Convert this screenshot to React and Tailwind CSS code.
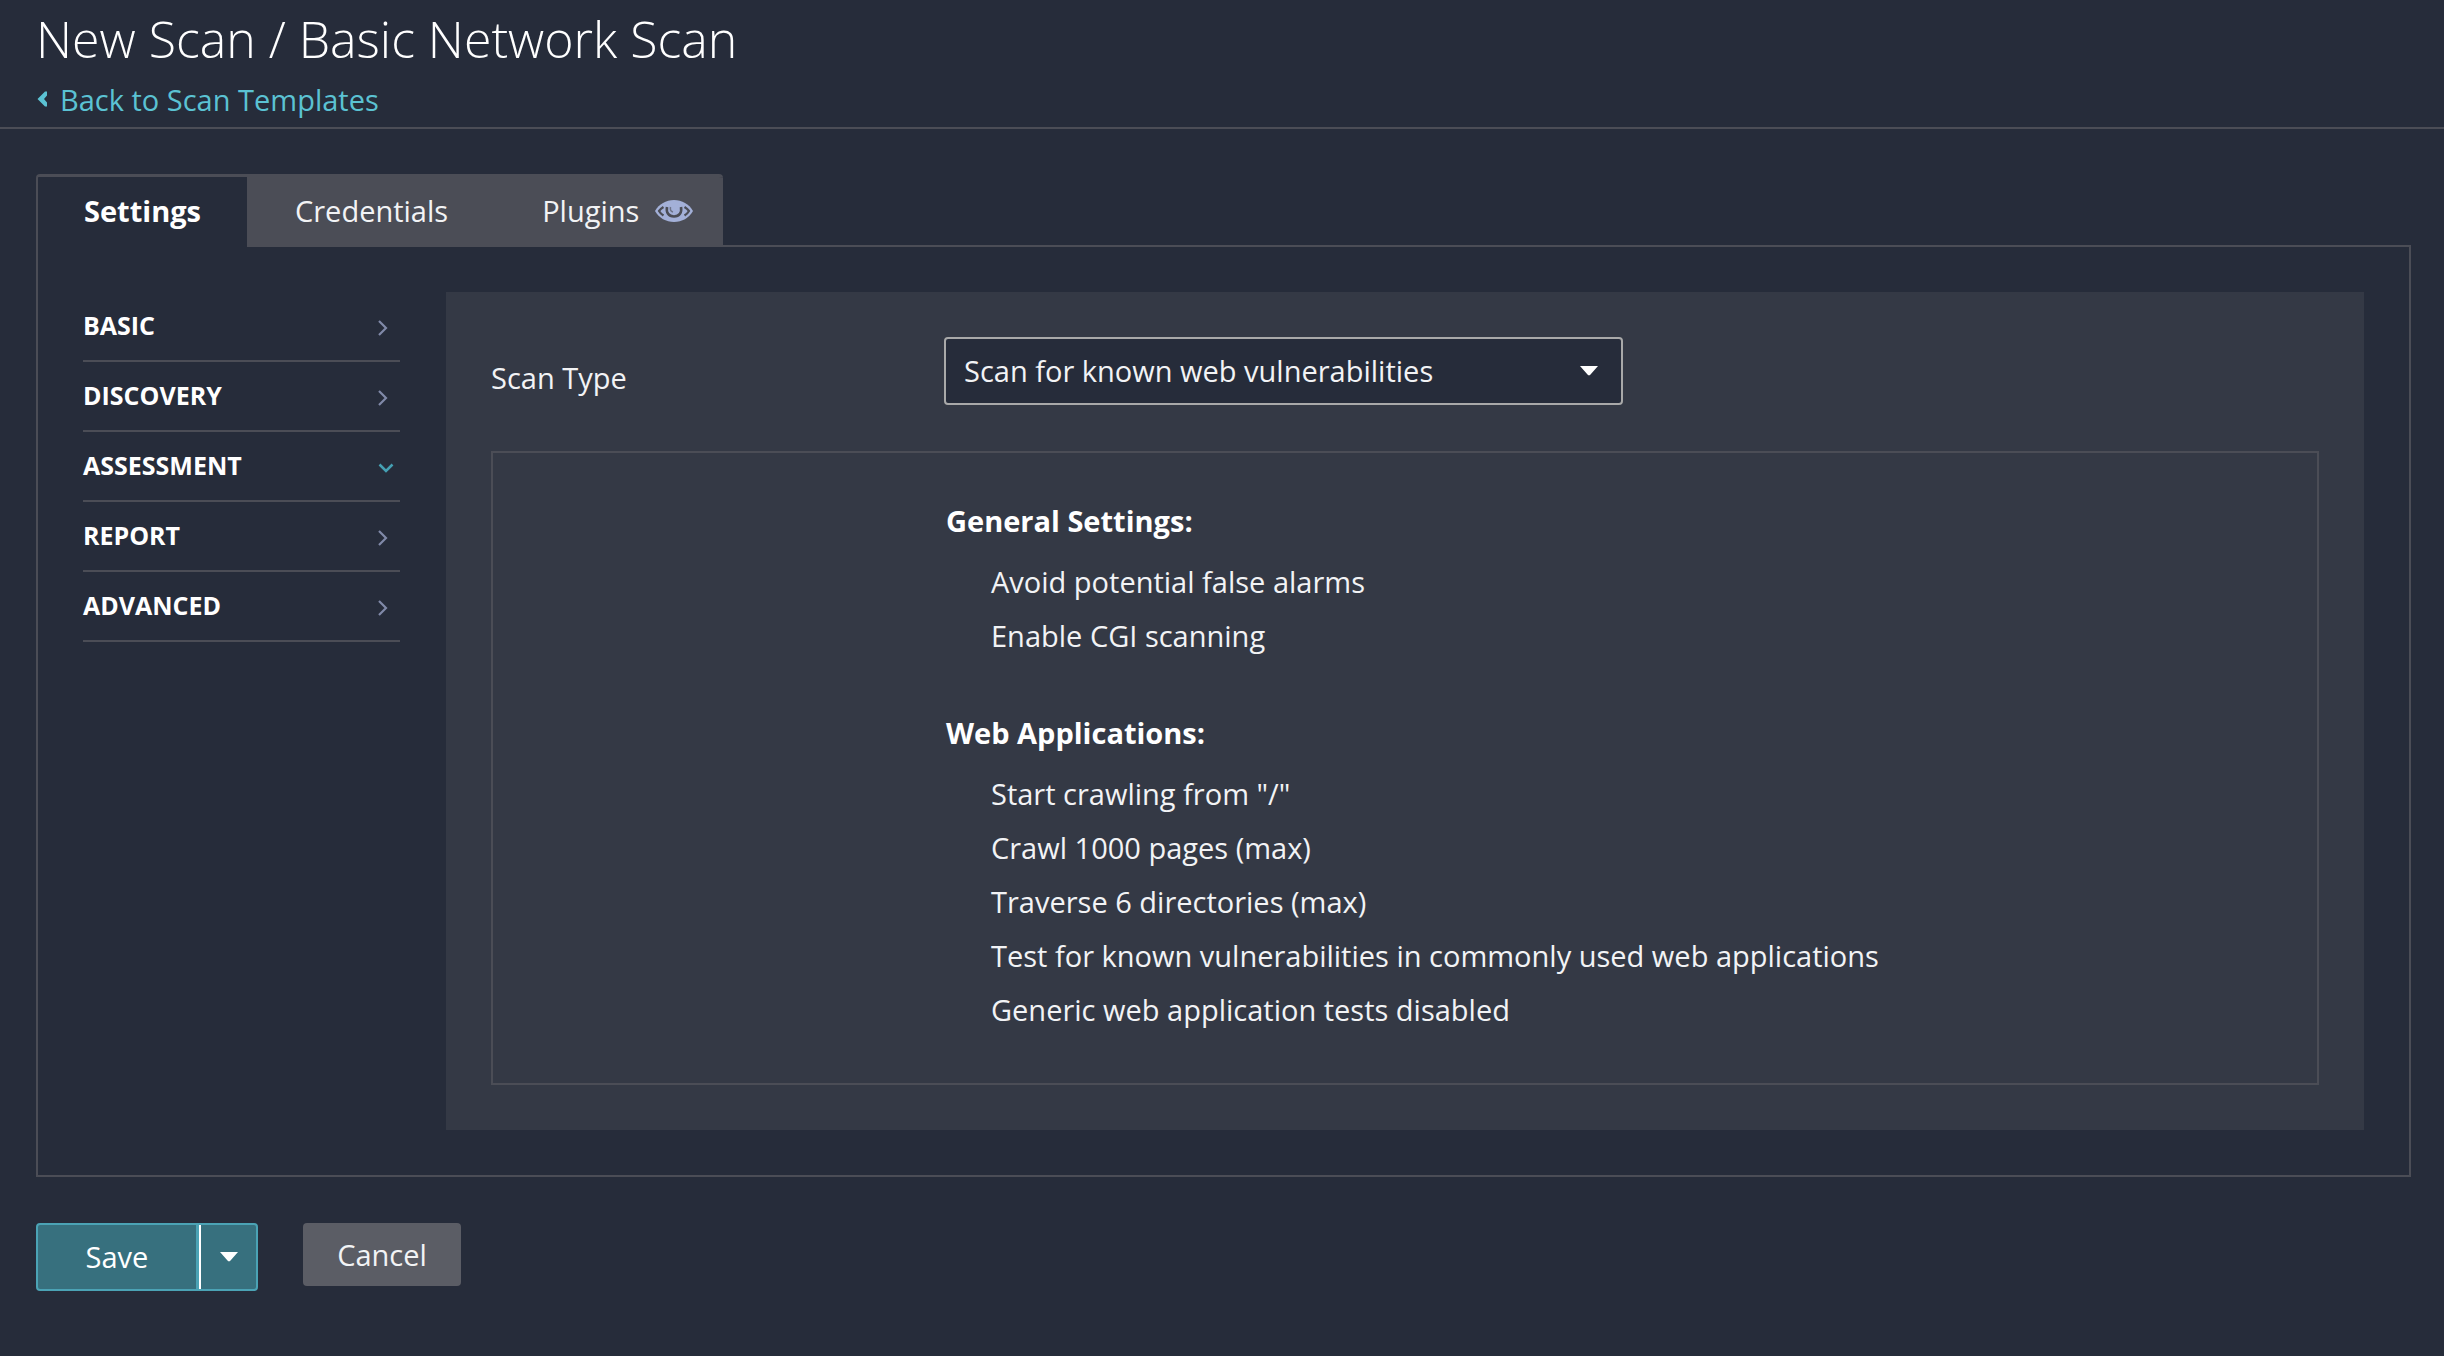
import React from "react";

const NAV = [
  { label: "BASIC" },
  { label: "DISCOVERY" },
  { label: "ASSESSMENT", open: true },
  { label: "REPORT" },
  { label: "ADVANCED" },
];

const SECTIONS = [
  {
    title: "General Settings:",
    items: ["Avoid potential false alarms", "Enable CGI scanning"],
  },
  {
    title: "Web Applications:",
    items: [
      'Start crawling from "/"',
      "Crawl 1000 pages (max)",
      "Traverse 6 directories (max)",
      "Test for known vulnerabilities in commonly used web applications",
      "Generic web application tests disabled",
    ],
  },
];

function Caret({ className }) {
  return (
    <svg className={className} width="20" height="12" viewBox="0 0 20 12" aria-hidden="true">
      <path d="M1 1h18l-7.5 8.5a2 2 0 0 1-3 0z" fill="currentColor" />
    </svg>
  );
}

function BackIcon() {
  return (
    <svg width="12" height="18" viewBox="0 0 12 18" aria-hidden="true">
      <path d="M9 0.500h2v4L8 8l3 3.500v4H9L1.500 8z" fill="currentColor" />
    </svg>
  );
}

function Eye() {
  return (
    <svg width="38" height="22" viewBox="0 0 38 22" className="text-[#a3b0d8]" aria-hidden="true">
      <path d="M0 11C4 4 11 0 19 0s15 4 19 11c-4 7-11 11-19 11S4 18 0 11z" fill="currentColor" />
      <path
        d="M8.500 7C6.500 8.300 5 9.600 4 11c1 1.800 2.500 3.200 4.500 4.500M29.500 7c2 1.300 3.500 2.600 4.500 4-1 1.800-2.500 3.200-4.500 4.500"
        fill="none"
        stroke="#4b4d56"
        strokeWidth="2.200"
      />
      <path d="M12 7c-1 5.500 1.500 9.500 7 9.500S27 12.500 26 7" fill="none" stroke="#4b4d56" strokeWidth="2.600" />
      <path d="M15.500 7c-.500 2.500 .500 4.500 2.500 5" fill="none" stroke="#4b4d56" strokeWidth="1.500" opacity=".6" />
    </svg>
  );
}

function NavArrow({ open }) {
  return open ? (
    <svg width="16" height="16" viewBox="0 0 16 16" className="mt-1 text-[#45a0b3]" aria-hidden="true">
      <path d="M1.500 4.500 8 11l6.500-6.500" fill="none" stroke="currentColor" strokeWidth="2.500" />
    </svg>
  ) : (
    <svg width="10" height="16" viewBox="0 0 10 16" className="mr-1.5 mt-1 text-[#8089a8]" aria-hidden="true">
      <path d="M1 1l7 7-7 7" fill="none" stroke="currentColor" strokeWidth="2.200" />
    </svg>
  );
}

export default function App() {
  return (
    <div className="min-h-screen bg-[#262c3a] font-['Open_Sans',sans-serif] text-[29px] text-[#f2f3f5]">
      <header className="border-b-2 border-[#4b4d56] px-9 pb-1.5">
        <h1 className="text-[50px] font-light leading-[78px] text-white">New Scan / Basic Network Scan</h1>
        <a href="#templates" className="flex items-center gap-3 leading-[43px] text-[#5bc2d3]">
          <BackIcon />
          Back to Scan Templates
        </a>
      </header>

      <main className="py-[45px] pl-9 pr-[33px]">
        <div role="tablist" className="flex">
          <div className="-mb-0.5 flex overflow-hidden rounded-t-[4px] border-l-2 border-t-[3px] border-[#4b4d56] leading-[40px]">
            <button role="tab" aria-selected="true" className="h-[70px] bg-[#262c3a] px-[46px] pb-0.5 font-bold text-white">
              Settings
            </button>
            <button role="tab" aria-selected="false" className="h-[70px] bg-[#4b4d56] px-12 pb-0.5">
              Credentials
            </button>
            <button
              role="tab"
              aria-selected="false"
              className="flex h-[70px] items-center gap-4 bg-[#4b4d56] pb-0.5 pl-[46px] pr-[30px]"
            >
              Plugins
              <Eye />
            </button>
          </div>
        </div>

        <div className="flex gap-[46px] border-2 border-[#4b4d56] p-[45px]">
          <nav className="w-[317px] shrink-0">
            {NAV.map((n) => (
              <a
                key={n.label}
                href={"#" + n.label.toLowerCase()}
                className="flex h-[70px] items-center justify-between border-b-2 border-[#4b4d56] pr-1.5 text-[25px] font-bold text-white"
              >
                {n.label}
                <NavArrow open={n.open} />
              </a>
            ))}
          </nav>

          <section className="min-w-0 flex-1 bg-[#343945] p-[45px]">
            <div className="mb-[46px] flex items-center">
              <label htmlFor="scan-type" className="w-[453px] shrink-0 pt-3.5">
                Scan Type
              </label>
              <div className="relative w-[679px]">
                <select
                  id="scan-type"
                  className="h-[68px] w-full appearance-none rounded-[4px] border-2 border-[#a9a9a9] bg-[#262c3a] px-[18px] text-[#f2f3f5]"
                >
                  <option>Scan for known web vulnerabilities</option>
                </select>
                <Caret className="pointer-events-none absolute right-6 top-7 text-white" />
              </div>
            </div>

            <div className="border-2 border-[#4b4d56] pb-[46px] pl-[453px] pt-[41px] leading-[54px]">
              {SECTIONS.map((s) => (
                <div key={s.title} className="not-first:mt-[43px]">
                  <h2 className="mb-[7px] font-bold text-white">{s.title}</h2>
                  <ul className="pl-[45px]">
                    {s.items.map((i) => (
                      <li key={i}>{i}</li>
                    ))}
                  </ul>
                </div>
              ))}
            </div>
          </section>
        </div>

        <div className="mt-[46px] flex items-start gap-[45px]">
          <div className="flex h-[68px] overflow-hidden rounded-[4px] border-2 border-[#4ba3b5] bg-[#37707e] text-white">
            <button className="w-[161px] border-r-[3px] border-[#4ba3b5]">Save</button>
            <button aria-label="More save options" className="flex w-[57px] items-center justify-center border-l-2 border-white">
              <Caret />
            </button>
          </div>
          <button className="h-[63px] w-[158px] rounded-[4px] bg-[#5b5d65]">Cancel</button>
        </div>
      </main>
    </div>
  );
}
